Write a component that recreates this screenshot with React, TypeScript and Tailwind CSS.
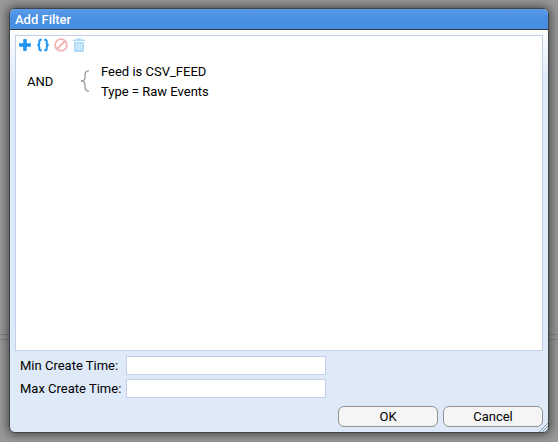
import React from "react";

function Toolbar() {
  return (
    <div className="flex h-[18px] items-center gap-1 pl-[2px]">
      <svg className="size-[14px]" viewBox="0 0 14 14" fill="#2196f3">
        <path d="M5.200 1.800Q5.200 1 6 1h2q.8 0 .8.8v3.400h3.400q.8 0 .8.8v2q0 .8-.8.8H8.800v3.400q0 .8-.8.8H6q-.8 0-.8-.8V8.800H1.800Q1 8.800 1 8V6q0-.8.8-.8h3.400z" />
      </svg>
      <svg className="size-[14px]" viewBox="0 0 14 14" fill="none" stroke="#2196f3" strokeWidth="2">
        <path d="M5.800 1.700H4.900Q3.300 1.700 3.300 3.300v1.900Q3.300 7 1.300 7q2 0 2 1.800v1.900q0 1.600 1.600 1.600h.9M8.200 1.700h.9q1.600 0 1.600 1.600v1.900q0 1.800 2 1.800-2 0-2 1.800v1.900q0 1.600-1.600 1.600h-.9" />
      </svg>
      <svg className="size-[14px]" viewBox="0 0 14 14" fill="none" stroke="#f3b5b4" strokeWidth="1.900">
        <circle cx="7" cy="7" r="5.900" />
        <path d="M3 11 11 3" />
      </svg>
      <svg className="size-[14px]" viewBox="0 0 14 14" fill="#b0daf9">
        <path d="M1 1.500h3.500L5.300.2h3.400l.8 1.300H13v1.600H1zM2 4h10v8.700q0 1.300-1.300 1.300H3.300Q2 14 2 12.700z" />
        <path d="M4.600 5.500v6.500M7 5.500v6.500M9.400 5.500v6.500" stroke="#e5f4fe" strokeWidth="1" />
      </svg>
    </div>
  );
}

function TimeField({ label }: { label: string }) {
  return (
    <label className="flex h-[19px] items-center">
      <span className="w-[106px] whitespace-nowrap">{label}</span>
      <input className="h-[19px] w-[200px] border border-[#c5cde8] bg-white px-1 outline-none" />
    </label>
  );
}

function DialogButton({ children }: { children: React.ReactNode }) {
  return (
    <button className="h-[21px] w-[100px] rounded-[6px] border border-[#929292] bg-[#f5f5f5] text-center leading-[19px]">
      {children}
    </button>
  );
}

export default function App() {
  return (
    <div className="relative h-[442px] w-[558px] overflow-hidden bg-[#999999] pt-[8px] pl-[9px] font-['Roboto',sans-serif] text-[13px] leading-[20px] text-black">
      <div className="absolute top-[334px] left-0 h-[6px] w-full border-y border-[#7d838f]" />
      <div className="relative flex h-[425px] w-[540px] flex-col overflow-hidden rounded-[6px] border border-[#404347] bg-[#deeaf8] bg-[linear-gradient(to_bottom,#ffffff_20px,#deeaf8_72px)] shadow-[0_0_10px_2px_rgba(0,0,0,0.5)]">
        <div className="h-[21px] shrink-0 border-b border-[#333a44] bg-[linear-gradient(to_bottom,#5b9bea,#488ee3_10px)] pt-px pl-[5px] font-medium text-white">
          Add Filter
        </div>
        <div className="mx-[5px] mt-[5px] h-[316px] shrink-0 border border-[#c5cde8] bg-white">
          <Toolbar />
          <div className="mt-[8px] flex items-center pl-[11px]">
            <span className="w-[53px]">AND</span>
            <svg className="mb-[2px] h-[22px] w-[10px]" viewBox="0 0 10 22" fill="none" stroke="#999" strokeWidth="1.300">
              <path d="M9 .7Q5 1 5 5v2.500Q5 11 1 11q4 0 4 3.500V17q0 4 4 4.300" />
            </svg>
            <div className="pl-[11px]">
              <div>Feed is CSV_FEED</div>
              <div>Type = Raw Events</div>
            </div>
          </div>
        </div>
        <div className="mt-[5px] flex flex-col gap-1 pl-[10px]">
          <TimeField label="Min Create Time:" />
          <TimeField label="Max Create Time:" />
        </div>
        <div className="mt-[8px] flex justify-end gap-[5px] pr-[5px]">
          <DialogButton>OK</DialogButton>
          <DialogButton>Cancel</DialogButton>
        </div>
        <svg className="absolute right-0 bottom-0 size-[9px]" viewBox="0 0 9 9" stroke="#8795a8" strokeWidth="1">
          <path d="M0 9 9 0M3 9l6-6M6 9l3-3" />
        </svg>
      </div>
    </div>
  );
}
